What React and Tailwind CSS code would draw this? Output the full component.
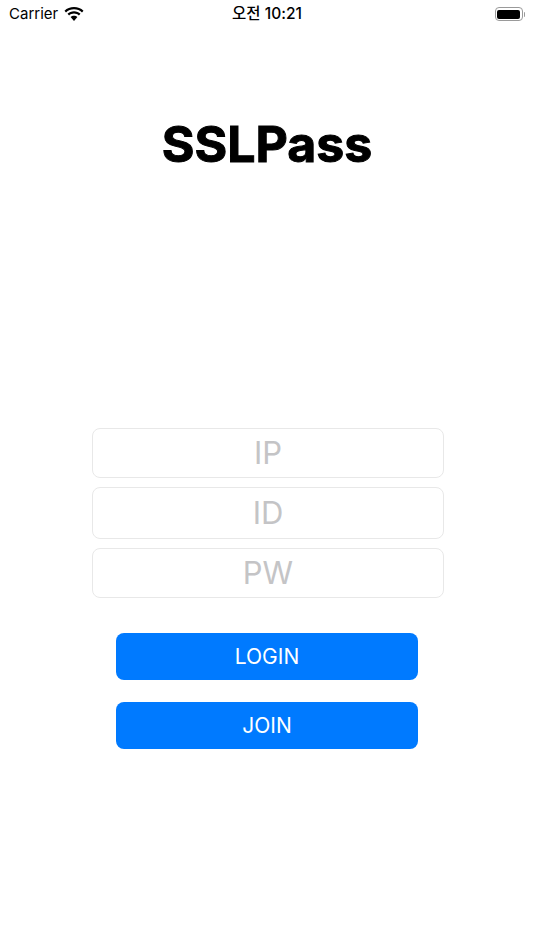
import React from "react";

const fieldFont = { fontFamily: "Inter, 'Liberation Sans', sans-serif" };

function StatusBar() {
  return (
    <div className="flex h-[28px] items-center justify-between pl-[9px] pr-[9px] text-[15px] text-black">
      <div className="flex w-[150px] items-center gap-[6px]">
        <span>Carrier</span>
        <svg width="20" height="15" viewBox="0 0 20 15" fill="currentColor">
          <path d="M10 2.2c3.1 0 5.900 1.200 8 3.200l1.500-1.700C17 1.300 13.700 0 10 0S3 1.300.5 3.700L2 5.400c2.100-2 4.900-3.200 8-3.200z" />
          <path d="M10 6.600c1.900 0 3.600.7 4.900 1.900l1.600-1.700C14.800 5.200 12.500 4.300 10 4.300S5.200 5.200 3.500 6.800l1.600 1.700C6.400 7.300 8.100 6.600 10 6.600z" />
          <path d="M10 8.800c-1.300 0-2.500.5-3.400 1.300L10 14l3.400-3.900c-.9-.8-2.100-1.300-3.400-1.300z" />
        </svg>
      </div>
      <span className="text-[15.500px] font-medium" style={{ fontFamily: "Inter, 'Noto Sans CJK KR', sans-serif" }}>오전 10:21</span>
      <div className="flex w-[150px] items-center justify-end">
        <div className="flex h-[14px] w-[28px] items-center rounded-[4px] border border-[#9a9a9a] p-[1.500px]">
          <div className="h-full w-full rounded-[2px] bg-black" />
        </div>
        <div className="ml-[1px] h-[5px] w-[1.500px] rounded-r-sm bg-[#9a9a9a]" />
      </div>
    </div>
  );
}

function Field({ placeholder, className }) {
  return (
    <input
      placeholder={placeholder}
      readOnly
      style={fieldFont}
      className={`w-full rounded-[8px] border border-[#e8e8e8] bg-white text-center text-[31px] font-normal opacity-[0.99] outline-none placeholder:text-[#c4c4c6] ${className}`}
    />
  );
}

function BlueButton({ label }) {
  return (
    <button
      style={fieldFont}
      className="h-[47.500px] w-full rounded-[8px] bg-[#007aff] text-[21px] text-white"
    >
      {label}
    </button>
  );
}

export default function App() {
  return (
    <div className="flex h-[950px] w-[534px] flex-col overflow-hidden bg-white" style={fieldFont}>
      <StatusBar />
      <h1 className="mt-[85px] text-center text-[50px] font-bold leading-[62px] text-black [-webkit-text-stroke:1px_black]">
        SSLPass
      </h1>
      <div className="mt-[252.500px] flex flex-col gap-[9px] pl-[92px] pr-[90px]">
        <Field placeholder="IP" className="h-[50px]" />
        <Field placeholder="ID" className="h-[52px]" />
        <Field placeholder="PW" className="h-[50px]" />
      </div>
      <div className="mt-[35px] flex flex-col gap-[21.500px] pl-[116px] pr-[116px]">
        <BlueButton label="LOGIN" />
        <BlueButton label="JOIN" />
      </div>
    </div>
  );
}
